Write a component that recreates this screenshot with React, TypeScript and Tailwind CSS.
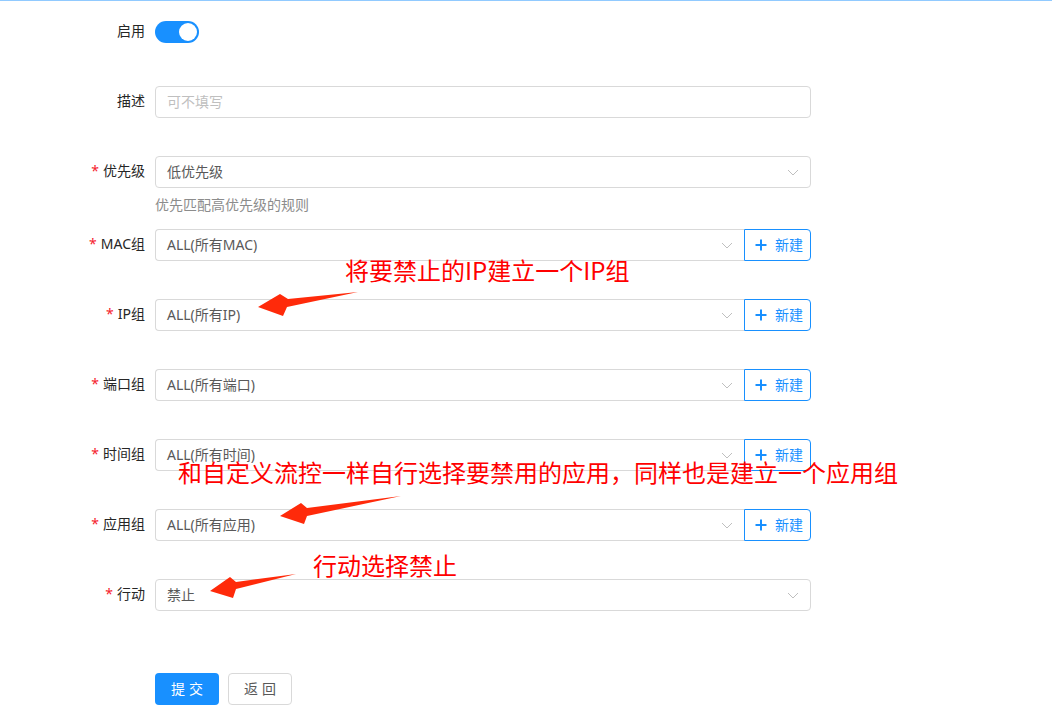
import React from "react";

const FONT = { fontFamily: '"Noto Sans", "Noto Sans CJK SC", sans-serif' };

function Chevron() {
  return (
    <svg width="12" height="12" viewBox="0 0 12 12" className="shrink-0 mt-[2px]">
      <path d="M1 4 L6 9 L11 4" fill="none" stroke="#bfbfbf" strokeWidth="1" />
    </svg>
  );
}

function Label({ text, required }: { text: string; required?: boolean }) {
  return (
    <div className="w-[155px] h-[32px] shrink-0 pr-[10px] text-right text-[14px] text-[#262626] leading-[30px]">
      {required && <span className="text-[#f5222d] mr-[4px]">*</span>}
      {text}
    </div>
  );
}

function Select({ value, withButton }: { value: string; withButton?: boolean }) {
  return (
    <div className="flex w-[656px]">
      <div
        className={
          "flex-1 h-[32px] border border-[#d9d9d9] bg-white flex items-center pl-[11px] pr-[11px] pb-[2px] " +
          (withButton ? "rounded-l-[4px] border-r-0" : "rounded-[4px]")
        }
      >
        <span className="flex-1 text-[14px] text-[#595959]">{value}</span>
        <Chevron />
      </div>
      {withButton && (
        <div className="w-[67px] h-[32px] border border-[#1890ff] rounded-r-[4px] flex items-center pl-[10px] gap-[8px] text-[#1890ff] text-[14px] bg-white pb-[2px]">
          <svg width="12" height="12" viewBox="0 0 12 12" className="mt-[2px]">
            <path d="M6 0.5 V11.5 M0.5 6 H11.5" stroke="#1890ff" strokeWidth="2" />
          </svg>
          <span>新建</span>
        </div>
      )}
    </div>
  );
}

export default function App() {
  return (
    <div className="relative w-[1052px] h-[727px] bg-white overflow-hidden" style={FONT}>
      <div className="h-px bg-[#91caff] w-full" />
      <div className="pt-[15px]">
        {/* 启用 */}
        <div className="flex items-center h-[32px] mb-[38px]">
          <Label text="启用" />
          <div className="w-[44px] h-[22px] rounded-full bg-[#1890ff] flex items-center justify-end pr-[2px]">
            <div className="w-[18px] h-[18px] rounded-full bg-white" />
          </div>
        </div>
        {/* 描述 */}
        <div className="flex items-center h-[32px] mb-[38px]">
          <Label text="描述" />
          <div className="w-[656px] h-[32px] border border-[#d9d9d9] rounded-[4px] flex items-center pl-[11px] pb-[2px] text-[14px] text-[#bfbfbf]">
            可不填写
          </div>
        </div>
        {/* 优先级 */}
        <div className="flex mb-[13px]">
          <Label text="优先级" required />
          <div>
            <Select value="低优先级" />
            <div className="mt-[6px] text-[14px] leading-[22px] text-[#8c8c8c]">优先匹配高优先级的规则</div>
          </div>
        </div>
        <div className="flex items-center h-[32px] mb-[38px]">
          <Label text="MAC组" required />
          <Select value="ALL(所有MAC)" withButton />
        </div>
        <div className="flex items-center h-[32px] mb-[38px]">
          <Label text="IP组" required />
          <Select value="ALL(所有IP)" withButton />
        </div>
        <div className="flex items-center h-[32px] mb-[38px]">
          <Label text="端口组" required />
          <Select value="ALL(所有端口)" withButton />
        </div>
        <div className="flex items-center h-[32px] mb-[38px]">
          <Label text="时间组" required />
          <Select value="ALL(所有时间)" withButton />
        </div>
        <div className="flex items-center h-[32px] mb-[38px]">
          <Label text="应用组" required />
          <Select value="ALL(所有应用)" withButton />
        </div>
        <div className="flex items-center h-[32px] mb-[62px]">
          <Label text="行动" required />
          <Select value="禁止" />
        </div>
        <div className="flex items-center h-[32px] pl-[155px] gap-[9px]">
          <div className="w-[64px] h-[32px] rounded-[4px] bg-[#1890ff] text-white text-[14px] flex items-center justify-center tracking-[4px] pl-[4px] pb-[2px]">
            提交
          </div>
          <div className="w-[64px] h-[32px] rounded-[4px] border border-[#d9d9d9] text-[#595959] text-[14px] flex items-center justify-center tracking-[4px] pl-[4px] pb-[2px]">
            返回
          </div>
        </div>
      </div>

      {/* annotations */}
      <svg className="absolute left-0 top-0 pointer-events-none" width="1052" height="727">
        <polygon
          points="258,307 280,294 288,299 358,292 287,307 283,316"
          fill="#ff2a0a"
        />
        <polygon
          points="280,516 301,503 307,508 401,496 307,516 304,524"
          fill="#ff2a0a"
        />
        <polygon
          points="210,591 230,577 236,582 296,574 236,589 233,598"
          fill="#ff2a0a"
        />
      </svg>
      <div
        className="absolute left-[345px] top-[255px] text-[24px] leading-[30px] text-[#ff0000] whitespace-nowrap"
        style={{ fontFamily: '"Noto Sans CJK SC", sans-serif' }}
      >
        将要禁止的IP建立一个IP组
      </div>
      <div
        className="absolute left-[178px] top-[457px] text-[24px] leading-[30px] text-[#ff0000] whitespace-nowrap"
        style={{ fontFamily: '"Noto Sans CJK SC", sans-serif' }}
      >
        和自定义流控一样自行选择要禁用的应用，同样也是建立一个应用组
      </div>
      <div
        className="absolute left-[313px] top-[550px] text-[24px] leading-[30px] text-[#ff0000] whitespace-nowrap"
        style={{ fontFamily: '"Noto Sans CJK SC", sans-serif' }}
      >
        行动选择禁止
      </div>
    </div>
  );
}
